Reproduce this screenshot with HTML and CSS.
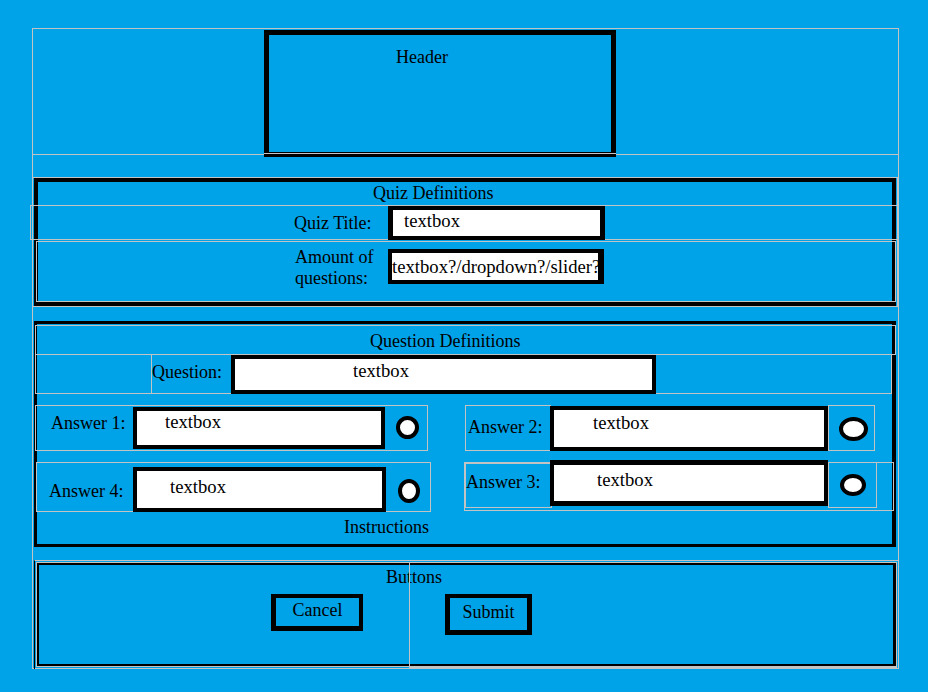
FILE: index.html
```html
<!DOCTYPE html>
<html>
<head>
<meta charset="utf-8">
<title>Quiz Wireframe</title>
<link rel="stylesheet" href="styles.css">
</head>
<body>
<div class="page">
  <div class="header-row">
    <div class="header-box">Header</div>
  </div>

  <div class="quiz-wrap">
    <div class="quiz">
      <div class="quiz-title">Quiz Definitions</div>
      <div class="qt-row">
        <div class="qt-label">Quiz Title:</div>
        <div class="qt-box">textbox</div>
      </div>
      <div class="amt-row">
        <div class="amt-label">Amount of questions:</div>
        <div class="amt-box">textbox?/dropdown?/slider?</div>
      </div>
    </div>
  </div>

  <div class="qd">
    <div class="qd-title">Question Definitions</div>
    <div class="q-row">
      <div class="q-label">Question:</div>
      <div class="q-box">textbox</div>
    </div>

    <div class="ans-row ans-row-1">
      <div class="ans ans1">
        <div class="ans-label">Answer 1:</div>
        <div class="tb">textbox</div>
        <div class="radio-cell"><div class="radio"></div></div>
      </div>
      <div class="ans ans2">
        <div class="ans-label">Answer 2:</div>
        <div class="tb">textbox</div>
        <div class="radio-cell"><div class="radio"></div></div>
      </div>
    </div>

    <div class="ans-row ans-row-2">
      <div class="ans ans4">
        <div class="ans-label">Answer 4:</div>
        <div class="tb">textbox</div>
        <div class="radio-cell"><div class="radio"></div></div>
      </div>
      <div class="ans ans3">
        <div class="ans-label">Answer 3:</div>
        <div class="tb">textbox</div>
        <div class="radio-cell"><div class="radio"></div></div>
      </div>
    </div>

    <div class="instructions">Instructions</div>
  </div>

  <div class="btn-wrap">
    <div class="btn-box">
      <div class="btn-title">Buttons</div>
      <div class="btn-row">
        <div class="btn cancel">Cancel</div>
        <div class="btn submit">Submit</div>
      </div>
    </div>
  </div>
</div>
</body>
</html>
```

FILE: styles.css
```css
* { box-sizing: border-box; }

body {
  margin: 0;
  background: #00a2e8;
  font-family: "Liberation Serif", "Times New Roman", serif;
  font-size: 18px;
  line-height: 20px;
  color: #000;
}

.page {
  margin: 28px 0 0 32px;
  width: 867px;
  height: 641px;
  border: 1px solid #c3c3c3;
}

/* Header */
.header-row {
  height: 125px;
  border-bottom: 1px solid #c3c3c3;
}
.header-box {
  position: relative;
  margin: 1px 0 0 231px;
  width: 352px;
  height: 127px;
  border: 5px solid #000;
  padding: 12px 0 0 127px;
}
.header-box::after {
  content: "";
  position: absolute;
  left: -5px;
  right: -5px;
  top: 118px;
  height: 1px;
  background: #c3c3c3;
}

/* Quiz definitions */
.quiz-wrap {
  margin-top: 22px;
  width: 865px;
  height: 130px;
  border-top: 1px solid #c3c3c3;
  border-bottom: 1px solid #c3c3c3;
  border-right: 1px solid #c3c3c3;
}
.quiz {
  margin-left: 1px;
  width: 862px;
  height: 128px;
  border: 4px solid #000;
}
.quiz-title {
  height: 22px;
  padding: 1px 0 0 335px;
}
.qt-row {
  display: flex;
  align-items: flex-start;
  margin: 1px 0 0 -8px;
  width: 868px;
  height: 35px;
  border: 1px solid #c3c3c3;
}
.qt-label {
  flex-shrink: 0;
  margin: 7px 0 0 263px;
  width: 94px;
}
.qt-box {
  flex-shrink: 0;
  width: 217px;
  height: 34px;
  border-style: solid;
  border-color: #000;
  border-width: 4px 5px;
  background: #fff;
  padding-left: 11px;
  font-size: 18.67px;
  line-height: 22px;
}
.amt-row {
  display: flex;
  align-items: flex-start;
  margin: 1px 0 0 -2px;
  width: 860px;
  height: 61px;
  border: 1px solid #c3c3c3;
}
.amt-label {
  flex-shrink: 0;
  margin: 5px 0 0 258px;
  width: 93px;
  line-height: 21px;
}
.amt-box {
  flex-shrink: 0;
  margin-top: 7px;
  width: 216px;
  height: 35px;
  border: 4px solid #000;
  border-right-width: 6px;
  background: #fff;
  padding-top: 3px;
  font-size: 18.67px;
  line-height: 22px;
  white-space: nowrap;
  overflow: hidden;
}

/* Question definitions */
.qd {
  margin: 14px 0 0 1px;
  width: 862px;
  height: 226px;
  border: 3px solid #000;
  border-right-width: 4px;
}
.qd-title {
  margin: 1px 0 0 -2px;
  width: 861px;
  height: 30px;
  border: 1px solid #c3c3c3;
  padding: 5px 0 0 334px;
}
.q-row {
  display: flex;
  margin: -1px 0 0 -2px;
  width: 857px;
  height: 40px;
  border: 1px solid #c3c3c3;
}
.q-label {
  flex-shrink: 0;
  margin-left: 115px;
  width: 80px;
  border-left: 1px solid #c3c3c3;
  padding-top: 7px;
}
.q-box {
  flex-shrink: 0;
  align-self: flex-start;
  width: 425px;
  height: 39px;
  border: 4px solid #000;
  background: #fff;
  padding: 1px 0 0 118px;
  font-size: 18.67px;
  line-height: 22px;
}

.ans-row {
  display: flex;
  align-items: flex-start;
}
.ans-row > * { flex-shrink: 0; }
.ans-row-1 { margin-top: 11px; }
.ans-row-2 { margin-top: 9px; }

.ans {
  display: flex;
  align-items: flex-start;
}
.ans > * { flex-shrink: 0; }

.tb {
  border: 4px solid #000;
  background: #fff;
  font-size: 18.67px;
  line-height: 22px;
}
.radio {
  border: 4px solid #000;
  border-radius: 50%;
  background: #fff;
}

/* Answer 1 */
.ans1 {
  margin-left: -2px;
  width: 393px;
  height: 46px;
  border: 1px solid #c3c3c3;
}
.ans1 .ans-label { width: 97px; padding: 7px 0 0 15px; }
.ans1 .tb { margin-top: 1px; width: 252px; height: 42px; padding-left: 28px; }
.ans1 .radio { margin: 10px 0 0 11px; width: 23px; height: 23px; }

/* Answer 2 */
.ans2 { margin-left: 37px; }
.ans2 .ans-label {
  width: 86px;
  height: 46px;
  border: 1px solid #c3c3c3;
  padding: 11px 0 0 2px;
}
.ans2 .tb { margin: 1px 0 0 -1px; width: 278px; height: 45px; padding: 2px 0 0 39px; }
.ans2 .radio-cell { width: 47px; height: 46px; border: 1px solid #c3c3c3; }
.ans2 .radio { margin: 11px 0 0 10px; width: 29px; height: 24px; }

/* Answer 4 */
.ans4 {
  margin: 2px 0 0 -1px;
  width: 395px;
  height: 50px;
  border: 1px solid #c3c3c3;
}
.ans4 .ans-label { width: 96px; padding: 18px 0 0 12px; }
.ans4 .tb { margin-top: 4px; width: 253px; height: 45px; padding: 5px 0 0 33px; }
.ans4 .radio { margin: 16px 0 0 12px; width: 22px; height: 24px; }

/* Answer 3 */
.ans3 {
  margin: 2px 0 0 33px;
  width: 430px;
  height: 49px;
  border: 1px solid #c3c3c3;
}
.ans3 .ans-label {
  width: 87px;
  height: 45px;
  border: 1px solid #c3c3c3;
  padding-top: 8px;
}
.ans3 .tb {
  margin: -3px 0 0 -2px;
  width: 278px;
  height: 46px;
  border-width: 5px 4px;
  padding: 4px 0 0 43px;
}
.ans3 .radio-cell { margin-top: -1px; width: 49px; height: 46px; border: 1px solid #c3c3c3; }
.ans3 .radio { margin: 11px 0 0 11px; width: 26px; height: 22px; }

.instructions {
  margin-top: 5px;
  padding-left: 307px;
}

/* Buttons */
.btn-wrap {
  margin: 13px 0 0 1px;
  height: 109px;
  border-top: 1px solid #c3c3c3;
  border-left: 1px solid #000;
}
.btn-box {
  position: relative;
  margin: 2px 0 0 2px;
  width: 859px;
  height: 103px;
  border: 2px solid #000;
  border-right-width: 3px;
  outline: 1px solid #c3c3c3;
}
.btn-box::after {
  content: "";
  position: absolute;
  left: 370px;
  top: -3px;
  right: -4px;
  bottom: -4px;
  border: 1px solid #c3c3c3;
}
.btn-title { padding: 2px 0 0 347px; }
.btn-row {
  display: flex;
  align-items: flex-start;
  margin-top: 7px;
}
.btn {
  flex-shrink: 0;
  display: flex;
  justify-content: center;
  border-style: solid;
  border-color: #000;
}
.cancel {
  margin-left: 232px;
  width: 92px;
  height: 37px;
  border-width: 4px 4px 5px 5px;
  padding-top: 2px;
}
.submit {
  margin-left: 82px;
  width: 87px;
  height: 41px;
  border-width: 4px 5px 5px 5px;
  padding-top: 4px;
}
```
